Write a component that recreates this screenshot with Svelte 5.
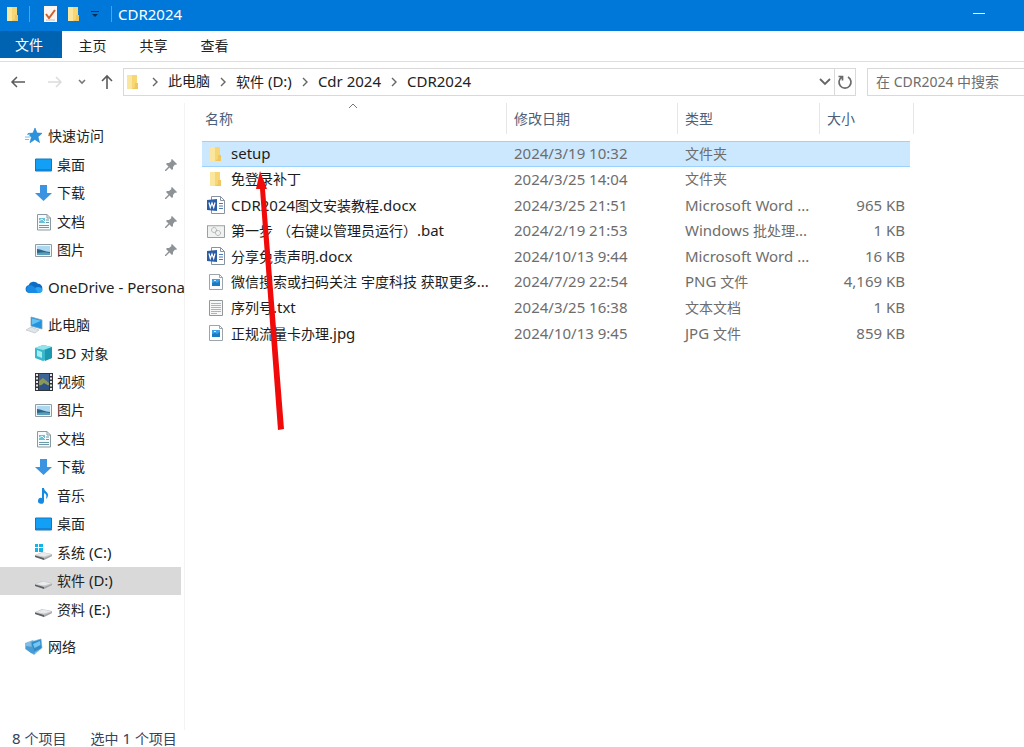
<script>
  const tabs = ['主页', '共享', '查看'];
  const crumbs = ['此电脑', '软件 (D:)', 'Cdr 2024', 'CDR2024'];

  const groups = [
    [
      { icon: 'star', label: '快速访问', root: true },
      { icon: 'desktop', label: '桌面', pinned: true },
      { icon: 'download', label: '下载', pinned: true },
      { icon: 'document', label: '文档', pinned: true },
      { icon: 'picture', label: '图片', pinned: true },
    ],
    [{ icon: 'cloud', label: 'OneDrive - Persona', root: true }],
    [
      { icon: 'computer', label: '此电脑', root: true },
      { icon: 'cube', label: '3D 对象' },
      { icon: 'video', label: '视频' },
      { icon: 'picture', label: '图片' },
      { icon: 'document', label: '文档' },
      { icon: 'download', label: '下载' },
      { icon: 'music', label: '音乐' },
      { icon: 'desktop', label: '桌面' },
      { icon: 'system', label: '系统 (C:)' },
      { icon: 'drive', label: '软件 (D:)', current: true },
      { icon: 'drive', label: '资料 (E:)' },
    ],
    [{ icon: 'network', label: '网络', root: true }],
  ];

  const files = [
    { icon: 'folder', name: 'setup', date: '2024/3/19 10:32', type: '文件夹', size: '' },
    { icon: 'folder', name: '免登录补丁', date: '2024/3/25 14:04', type: '文件夹', size: '' },
    { icon: 'word', name: 'CDR2024图文安装教程.docx', date: '2024/3/25 21:51', type: 'Microsoft Word ...', size: '965 KB' },
    { icon: 'batch', name: '第一步 （右键以管理员运行）.bat', date: '2024/2/19 21:53', type: 'Windows 批处理...', size: '1 KB' },
    { icon: 'word', name: '分享免责声明.docx', date: '2024/10/13 9:44', type: 'Microsoft Word ...', size: '16 KB' },
    { icon: 'image', name: '微信搜索或扫码关注 宇度科技 获取更多...', date: '2024/7/29 22:54', type: 'PNG 文件', size: '4,169 KB' },
    { icon: 'text', name: '序列号.txt', date: '2024/3/25 16:38', type: '文本文档', size: '1 KB' },
    { icon: 'image', name: '正规流量卡办理.jpg', date: '2024/10/13 9:45', type: 'JPG 文件', size: '859 KB' },
  ];

  let selected = $state(0);

  // Latin runs are set one size larger than the Chinese ones
  function runs(text) {
    return text.match(/[\x20-\x7e]+|[^\x20-\x7e]+/g) ?? [];
  }
</script>

{#snippet mixed(text)}{#each runs(text) as run}{#if run.charCodeAt(0) < 127}<span class="latin">{run}</span>{:else}{run}{/if}{/each}{/snippet}

{#snippet icon(name)}
  <svg class="icon" viewBox="0 0 18 18" aria-hidden="true">
    {#if name === 'folder'}
      <path d="M3 2h10v14H3z" fill="#f7d774" />
      <path d="M3 2h5v14H3z" fill="#fbe6a0" />
      <path d="M11 10h3v6H8l3-2z" fill="#efc75e" />
    {:else if name === 'star'}
      <path d="M10 1l2 5 5 .3-4 3.5 1.5 5.7-4.7-3-4.8 3.2 1.4-5.5L3 6.5l5-.4z" fill="#2a93e0" stroke="#1f7fc9" stroke-width=".6" />
      <path d="M0 10h5M0 12.500h4M2 7.500h3" stroke="#78bdec" />
    {:else if name === 'desktop'}
      <path d="M.5 3h16v12H.5z" fill="#12a0f6" stroke="#1379bd" />
      <path d="M1 13h16v2H1z" fill="#1583d1" />
    {:else if name === 'download'}
      <path d="M5 1h7v8h5l-8.500 8L0 9h5z" fill="#3b94e2" />
    {:else if name === 'document'}
      <path d="M2.500 1.500h9.500l3.500 3.500v12h-13z" fill="#f6fafb" stroke="#8b9aa0" />
      <path d="M12 1.500V5h3.500" fill="none" stroke="#8b9aa0" />
      <path d="M4 5h6v5H4z" fill="#68bfd6" />
      <path d="M11 7h3M11 9.500h3M4 12.500h10M4 14.500h10" stroke="#6c99a8" />
      <path d="M4 8l3-2 3 3" fill="none" stroke="#e5f8fb" />
    {:else if name === 'picture'}
      <path d="M.5 3.500h16v12H.5z" fill="#eef7fc" stroke="#8f9ca4" />
      <path d="M2 5h13v9H2z" fill="#aed7f2" />
      <path d="M2 8c4 0 8 3 13 3v3H2z" fill="#2f6582" />
      <path d="M2 12c5-1 9-1 13 0v2H2z" fill="#5a9ebf" />
    {:else if name === 'cloud'}
      <path d="M4 15a4 4 0 0 1-.5-7.800A5.500 5.500 0 0 1 13 5.800 4.700 4.700 0 0 1 14 15z" fill="#0f6cc4" />
      <path d="M3 8c3-2 6 0 11 6.500L13.500 15H4a4 4 0 0 1-1-7z" fill="#1a8be5" />
      <path d="M13 15l-3-5c3-2 7-.5 7.500 2A3 3 0 0 1 14 15z" fill="#2aa5f2" />
    {:else if name === 'computer'}
      <path d="M6 1l11 3v9L6 10z" fill="#2293dc" stroke="#7fa5bb" stroke-width=".8" />
      <path d="M7 2.500l9 2.300-9 4z" fill="#63c1f5" />
      <path d="M1 14l5-3 8 3-4 3z" fill="#dfe5e9" stroke="#b0bcc4" stroke-width=".6" />
    {:else if name === 'cube'}
      <path d="M0 4l8-3 9 2v11l-9 3-8-3z" fill="#39b8cb" />
      <path d="M0 4l8-3 9 2-9 3z" fill="#94e3ec" />
      <path d="M10 6l7-3v11l-7 3z" fill="#1c98b1" />
      <path d="M2 6l5 2v6l-5-2z" fill="#a5edf1" />
    {:else if name === 'video'}
      <path d="M0 0h18v18H0z" fill="#303338" />
      <path d="M4 1h10v16H4z" fill="#3f6495" />
      <path d="M4 8l4-3 6 5v2H4z" fill="#8b9859" />
      <path d="M4 14l5-4 5 3v4H4z" fill="#2c5383" />
      <path d="M2 1v16M16 1v16" stroke="#e3e6e8" stroke-width="2" stroke-dasharray="2 1.500" />
    {:else if name === 'music'}
      <path d="M7 1h2c0 3 4 4 4 7 0 2-1 3-2 4 1-4 0-5-2-6v8a3 3 0 1 1-2-3z" fill="#1689e0" />
    {:else if name === 'system' || name === 'drive'}
      {#if name === 'system'}
        <path d="M0 1h3v3H0zM4 1h4v3H4zM0 5h3v4H0zM4 5h4v4H4z" fill="#13b4e8" />
      {/if}
      <path d="M0 12l7-3 10 2v2l-8 4-9-3z" fill="#c5c7c9" />
      <path d="M1 12l7-2.500 8 2-7 2z" fill="#eaebec" />
      <path d="M0 12.500l9 2.500v2l-9-3z" fill="#5c5f62" />
      <path d="M9 15l8-3v1l-8 4z" fill="#a3a6a9" />
    {:else if name === 'network'}
      <path d="M0 5l8-3 8 9-7 6-9-6z" fill="#83bde3" />
      <path d="M6 4l10-3 1 9-9 5z" fill="#2d8ccb" stroke="#6daed8" stroke-width=".6" />
      <path d="M8 6l7-3 .5 4-6 3z" fill="#79c5ef" />
      <path d="M1 8l7 1 2 7-4-1-5-4z" fill="#4a9bd2" />
    {:else if name === 'word'}
      <path d="M4.500.5h9l4 4v13h-13z" fill="#fff" stroke="#8793a3" />
      <path d="M13.500.5v4h4" fill="none" stroke="#8793a3" />
      <path d="M12 7.500h4M12 10h4M12 12.500h4" stroke="#4f79b4" />
      <path d="M0 4l10-1v12L0 14z" fill="#2b5da6" />
      <path d="M2 6.500L3.300 11.500 5 7l1.700 4.500L8 6.500" fill="none" stroke="#fff" stroke-width="1.200" />
    {:else if name === 'batch'}
      <path d="M.5 3.500h17v12H.5z" fill="#f0f1f1" stroke="#9a9fa2" />
      <circle cx="7" cy="8" r="2.500" fill="none" stroke="#a6aaad" stroke-dasharray="1.500 .5" />
      <circle cx="11" cy="11" r="2.500" fill="none" stroke="#a6aaad" stroke-dasharray="1.500 .5" />
      <path d="M1 4h16" stroke="#c9cccf" />
    {:else if name === 'image'}
      <path d="M2.500 1.500h10l3 3v12h-13z" fill="#fdfdfd" stroke="#9aa5ad" />
      <path d="M12.500 1.500v3h3" fill="none" stroke="#9aa5ad" />
      <path d="M5 6h8v7H5z" fill="#1a7ac4" />
      <path d="M5 6h8v2l-3 2-2-1-3 1z" fill="#3ea0e4" />
      <path d="M7 7h2v1H7z" fill="#d2edff" />
    {:else if name === 'text'}
      <path d="M2.500 1.500h13v15h-13z" fill="#f7f7f7" stroke="#92979a" />
      <path d="M4 4.500h10M4 6.500h10M4 8.500h10M4 10.500h10M4 12.500h10M4 14.500h6" stroke="#b0b3b5" />
    {:else if name === 'properties'}
      <path d="M3 1h13v16H3z" fill="#fbf6f2" />
      <path d="M5 9l3 4 6-8" fill="none" stroke="#d1602f" stroke-width="2" />
      <path d="M5 15h9" stroke="#c5c2c4" />
    {/if}
  </svg>
{/snippet}

{#snippet chevron()}
  <svg class="chevron" viewBox="0 0 6 10" aria-hidden="true"><path d="M1 1l4 4-4 4" fill="none" stroke="#666" stroke-width="1.400" /></svg>
{/snippet}

<div class="explorer">
  <header class="titlebar">
    {@render icon('folder')}
    <span class="divider"></span>
    <button class="quick first" aria-label="属性">{@render icon('properties')}</button>
    <button class="quick" aria-label="新建文件夹">{@render icon('folder')}</button>
    <button class="customize" aria-label="自定义快速访问工具栏">
      <svg width="8" height="8" viewBox="0 0 8 8"><path d="M0 1.500h8" stroke="#0b2f52" /><path d="M1 4h6L4 7z" fill="#0b2f52" /></svg>
    </button>
    <span class="divider"></span>
    <h1 class="title">CDR2024</h1>
    <button class="minimize" aria-label="最小化"></button>
  </header>

  <nav class="ribbon">
    <button class="tab file">文件</button>
    {#each tabs as tab}
      <button class="tab">{tab}</button>
    {/each}
  </nav>

  <div class="toolbar">
    <div class="history">
      <button aria-label="后退">
        <svg width="16" height="14" viewBox="0 0 16 14"><path d="M15 7H2M7 2L2 7l5 5" fill="none" stroke="#5b5b5b" stroke-width="1.500" /></svg>
      </button>
      <button aria-label="前进" disabled>
        <svg width="16" height="14" viewBox="0 0 16 14"><path d="M1 7h13M9 2l5 5-5 5" fill="none" stroke="#dcdcdc" stroke-width="1.500" /></svg>
      </button>
      <button aria-label="最近浏览的位置">
        <svg width="8" height="6" viewBox="0 0 8 6"><path d="M1 1l3 3 3-3" fill="none" stroke="#777" stroke-width="1.600" /></svg>
      </button>
      <button aria-label="向上">
        <svg width="12" height="16" viewBox="0 0 12 16"><path d="M6 15V2M1 7l5-5 5 5" fill="none" stroke="#5b5b5b" stroke-width="1.600" /></svg>
      </button>
    </div>
    <div class="address">
      {@render icon('folder')}
      {#each crumbs as crumb}
        {@render chevron()}
        <button class="crumb"><span>{@render mixed(crumb)}</span></button>
      {/each}
      <button class="drop" aria-label="以前的位置">
        <svg width="12" height="8" viewBox="0 0 12 8"><path d="M1 1l5 5 5-5" fill="none" stroke="#666" stroke-width="1.800" /></svg>
      </button>
      <button class="refresh" aria-label="刷新">
        <svg width="16" height="16" viewBox="0 0 16 16"><path d="M11 3a6 6 0 1 1-6 0M1.500 2.500h4v4" fill="none" stroke="#6a6a6a" stroke-width="1.700" /></svg>
      </button>
    </div>
    <input class="search" type="search" placeholder="在 CDR2024 中搜索" aria-label="在 CDR2024 中搜索" />
  </div>

  <div class="body">
    <aside class="sidebar">
      {#each groups as group}
        <ul class="group" style="flex-grow: {group.length}">
          {#each group as item}
            <li>
              <button class="node" class:root={item.root} class:current={item.current}>
                {@render icon(item.icon)}
                <span class="label">{@render mixed(item.label)}</span>
                {#if item.pinned}
                  <svg class="pin" viewBox="0 0 12 12" aria-hidden="true">
                    <path d="M7 0l5 5-1 1-1-.5L8 8v2L7 11 4.500 8.500 1 12H0v-1l3.500-3.500L1 5l1-1h2l2.500-2L6 1z" fill="#8d9296" />
                  </svg>
                {/if}
              </button>
            </li>
          {/each}
        </ul>
      {/each}
    </aside>

    <main class="content">
      <table>
        <colgroup>
          <col class="c-name" /><col class="c-date" /><col class="c-type" /><col class="c-size" /><col class="c-edge" />
        </colgroup>
        <thead>
          <tr>
            <th class="name">
              名称
              <svg class="sort" viewBox="0 0 10 6" aria-hidden="true"><path d="M1 5l4-4 4 4" fill="none" stroke="#777" /></svg>
            </th>
            <th>修改日期</th>
            <th>类型</th>
            <th class="last">大小</th>
            <th class="edge"></th>
          </tr>
        </thead>
        <tbody>
          {#each files as file, i}
            <tr class:selected={selected === i} onclick={() => (selected = i)}>
              <td class="name">
                <div class="file-name">
                  {@render icon(file.icon)}
                  <span>{@render mixed(file.name)}</span>
                </div>
              </td>
              <td>{@render mixed(file.date)}</td>
              <td>{@render mixed(file.type)}</td>
              <td class="size">{@render mixed(file.size)}</td>
              <td class="edge"></td>
            </tr>
          {/each}
        </tbody>
      </table>

      <svg class="arrow" viewBox="0 0 30 260" aria-hidden="true">
        <path d="M6 0l7 18h-2l19 240-6 1L6 18H2z" fill="#f00a0a" />
      </svg>
    </main>
  </div>

  <footer class="status">
    <span>{@render mixed('8 个项目')}</span>
    <span>{@render mixed('选中 1 个项目')}</span>
  </footer>
</div>

<style>
  :global(body) {
    margin: 0;
    background: #fff;
  }
  .explorer {
    display: flex;
    flex-direction: column;
    min-height: 100vh;
    overflow: hidden;
    font-family: "Noto Sans", "Noto Sans CJK SC", sans-serif;
    font-size: 14px;
    line-height: 20px;
    color: #222;
  }
  button {
    display: flex;
    align-items: center;
    justify-content: center;
    margin: 0;
    padding: 0;
    border: 0;
    background: none;
    font: inherit;
    color: inherit;
    white-space: nowrap;
  }
  .latin {
    font-size: 15px;
  }
  .icon {
    flex: none;
    width: 18px;
    height: 18px;
  }

  .titlebar {
    display: flex;
    align-items: center;
    height: 31px;
    padding: 0 38px 4px 4px;
    box-sizing: border-box;
    background: #0078d9;
    color: #fff;
  }
  .divider {
    width: 1px;
    height: 16px;
    margin-left: 7px;
    background: #5a9fd8;
  }
  .quick {
    margin-left: 6px;
  }
  .quick.first {
    margin-left: 11px;
  }
  .customize {
    margin: 0 5px 0 8px;
  }
  .title {
    margin: 0 auto 0 6px;
    font-size: 15px;
    font-weight: 400;
  }
  .minimize {
    width: 14px;
    height: 20px;
  }
  .minimize::before {
    content: "";
    width: 12px;
    height: 1px;
    background: #fff;
  }

  .ribbon {
    display: flex;
    height: 30px;
    border-bottom: 1px solid #dedfe0;
  }
  .tab {
    width: 61px;
  }
  .file {
    width: 62px;
    height: 27px;
    padding-right: 4px;
    background: #0063b1;
    color: #fff;
  }

  .toolbar {
    display: flex;
    height: 28px;
    padding-top: 6px;
  }
  .history {
    display: flex;
    gap: 15px;
    width: 113px;
    padding-left: 10px;
  }
  .history button:first-child {
    margin-right: 6px;
  }
  .address {
    display: flex;
    flex: 1;
    align-items: center;
    border: 1px solid #d9d9d9;
  }
  .chevron {
    width: 6px;
    height: 10px;
    margin: 0 10px;
  }
  .crumb {
    padding-bottom: 2px;
  }
  .drop {
    align-self: stretch;
    width: 18px;
    margin-left: auto;
  }
  .refresh {
    align-self: stretch;
    width: 21px;
    border-left: 1px solid #d9d9d9;
  }
  .search {
    width: 157px;
    margin-left: 11px;
    padding: 0 8px;
    box-sizing: border-box;
    border: 1px solid #d9d9d9;
    border-right: 0;
    border-radius: 0;
    appearance: none;
    background: #fff;
    font: inherit;
  }
  .search::placeholder {
    color: #6d6d6d;
    opacity: 1;
  }

  .body {
    display: flex;
    flex: 1;
    padding-top: 7px;
  }
  .sidebar {
    display: flex;
    flex-direction: column;
    gap: 9px;
    width: 185px;
    padding: 19px 0 69px;
    box-sizing: border-box;
    border-right: 1px solid #f3f3f3;
  }
  .group {
    display: flex;
    flex-direction: column;
    margin: 0;
    padding: 0;
    list-style: none;
  }
  .group li {
    display: flex;
    flex: 1 1 28px;
    max-height: 32px;
    padding-right: 3px;
  }
  .node {
    flex: 1;
    gap: 4px;
    min-width: 0;
    padding: 0 4px 0 35px;
    justify-content: flex-start;
  }
  .node.root {
    padding: 0 0 0 24px;
  }
  .root .icon {
    width: 20px;
  }
  .node.current {
    background: #d9d9d9;
  }
  .pin {
    width: 12px;
    height: 12px;
    margin-left: auto;
  }

  .content {
    position: relative;
    flex: 1;
    min-width: 0;
    padding-left: 17px;
  }
  table {
    table-layout: fixed;
    width: 712px;
    height: 243px;
    border-spacing: 0;
  }
  .c-name {
    width: 305px;
  }
  .c-date {
    width: 171px;
  }
  .c-type {
    width: 142px;
  }
  .c-size {
    width: 90px;
  }
  .c-edge {
    width: 4px;
  }
  th {
    height: 31px;
    padding: 0 0 0 7px;
    box-sizing: border-box;
    border-right: 1px solid #e6e6e6;
    border-bottom: 0;
    font-weight: 400;
    text-align: left;
    color: #4c607a;
  }
  th.name {
    position: relative;
    padding-left: 3px;
  }
  th.last {
    border-right: 0;
  }
  th.edge {
    padding: 0;
  }
  .sort {
    position: absolute;
    top: 0;
    left: 50%;
    width: 10px;
    height: 6px;
    margin-left: -6px;
  }
  thead::after {
    content: "";
    display: table-row;
    height: 7px;
  }
  td {
    padding: 0 0 0 7px;
    color: #6d6d6d;
    white-space: nowrap;
  }
  td.name {
    padding-left: 5px;
    color: #1c1c1c;
  }
  td.size {
    padding: 0 5px 0 0;
    text-align: right;
  }
  td.edge {
    padding: 0;
  }
  .file-name {
    display: flex;
    align-items: center;
    gap: 6px;
  }
  .selected td:not(.edge) {
    background: #cce8ff;
    box-shadow: inset 0 1px #99d1ff, inset 0 -1px #99d1ff;
  }
  .arrow {
    position: absolute;
    top: 68px;
    left: 69px;
    width: 30px;
    height: 260px;
    pointer-events: none;
  }

  .status {
    display: flex;
    gap: 24px;
    height: 17px;
    padding-left: 12px;
    line-height: 16px;
    color: #34445c;
  }
</style>
